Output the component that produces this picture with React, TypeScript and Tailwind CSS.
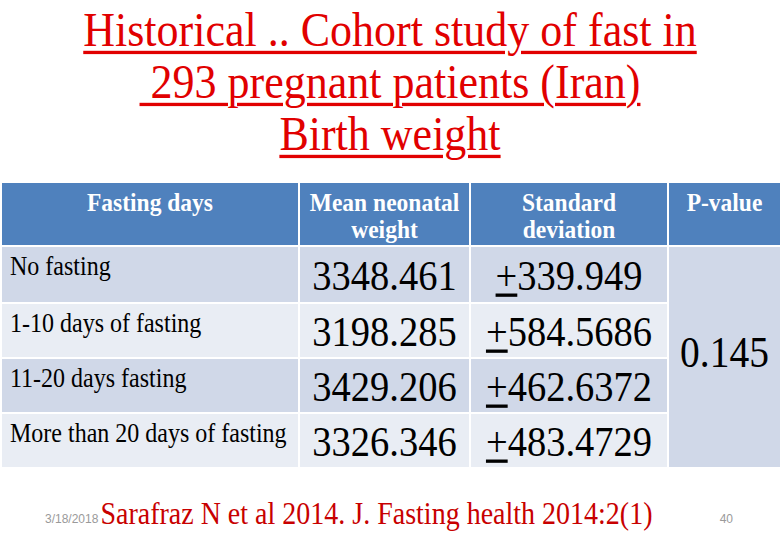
import React from "react";

const rows = [
  { label: "No fasting", mean: "3348.461", sd: "339.949", bg: "bg-[#d0d8e8]" },
  { label: "1-10 days of fasting", mean: "3198.285", sd: "584.5686", bg: "bg-[#e9edf4]" },
  { label: "11-20 days fasting", mean: "3429.206", sd: "462.6372", bg: "bg-[#d0d8e8]" },
  { label: "More than 20 days of fasting", mean: "3326.346", sd: "483.4729", bg: "bg-[#e9edf4]" },
];

const serif = "font-['Liberation_Serif','Times_New_Roman',serif]";

function Tall({ children, className = "" }: { children: React.ReactNode; className?: string }) {
  return <span className={`inline-block scale-y-[1.1] ${className}`}>{children}</span>;
}

export default function App() {
  return (
    <div className={`w-[780px] h-[540px] bg-white overflow-hidden ${serif}`}>
      <div className="pt-[5px] flex flex-col items-center text-[44px] leading-[52px] text-[#e10000] underline decoration-[3px] underline-offset-[4px]">
        <Tall>Historical .. Cohort study of fast in</Tall>
        <Tall className="whitespace-pre">{" 293 pregnant patients (Iran)"}</Tall>
        <Tall>Birth weight</Tall>
      </div>

      <div className="mt-[22px] ml-[2px] grid grid-cols-[296px_169px_196px_1fr] grid-rows-[62px_55px_53px_53px_53px] gap-[2px]">
        <div className="bg-[#4f81bd] text-white font-bold text-[23.5px] leading-[27px] text-center pt-[6px]">
          <Tall>Fasting days</Tall>
        </div>
        <div className="bg-[#4f81bd] text-white font-bold text-[23.5px] leading-[27px] text-center pt-[6px]">
          <Tall>Mean neonatal</Tall>
          <br />
          <Tall>weight</Tall>
        </div>
        <div className="bg-[#4f81bd] text-white font-bold text-[23.5px] leading-[27px] text-center pt-[6px]">
          <Tall>Standard</Tall>
          <br />
          <Tall>deviation</Tall>
        </div>
        <div className="bg-[#4f81bd] text-white font-bold text-[23.5px] leading-[27px] text-center pt-[6px]">
          <Tall>P-value</Tall>
        </div>

        {rows.map((r, i) => (
          <React.Fragment key={r.label}>
            <div className={`${r.bg} col-start-1 text-black text-[24px] leading-[28px] pl-[8px] pt-[5px]`}>
              <Tall>{r.label}</Tall>
            </div>
            <div className={`${r.bg} col-start-2 flex items-center justify-center text-black text-[38.5px] pt-[4px]`}>
              <Tall>{r.mean}</Tall>
            </div>
            <div className={`${r.bg} col-start-3 flex items-center justify-center text-black text-[38.5px] pt-[4px]`}>
              <Tall>
                <span className="underline decoration-[3px] underline-offset-[3px]">+</span>
                {r.sd}
              </Tall>
            </div>
            {i === 0 && (
              <div className="bg-[#d0d8e8] col-start-4 row-start-2 row-span-4 flex items-center justify-center pb-[6px] text-black text-[39.5px]">
                <Tall>0.145</Tall>
              </div>
            )}
          </React.Fragment>
        ))}
      </div>

      <div className="mt-[30px] flex items-baseline leading-[34px]">
        <span className="pl-[45px] pr-[2px] text-[12px] text-[#9a9a9a] font-['Liberation_Sans',sans-serif]">3/18/2018</span>
        <span className="text-[28px] text-[#c80000]">
          <Tall>Sarafraz N et al 2014. J. Fasting health 2014:2(1)</Tall>
        </span>
        <span className="ml-auto pr-[47px] text-[12px] text-[#9a9a9a] font-['Liberation_Sans',sans-serif]">40</span>
      </div>
    </div>
  );
}
